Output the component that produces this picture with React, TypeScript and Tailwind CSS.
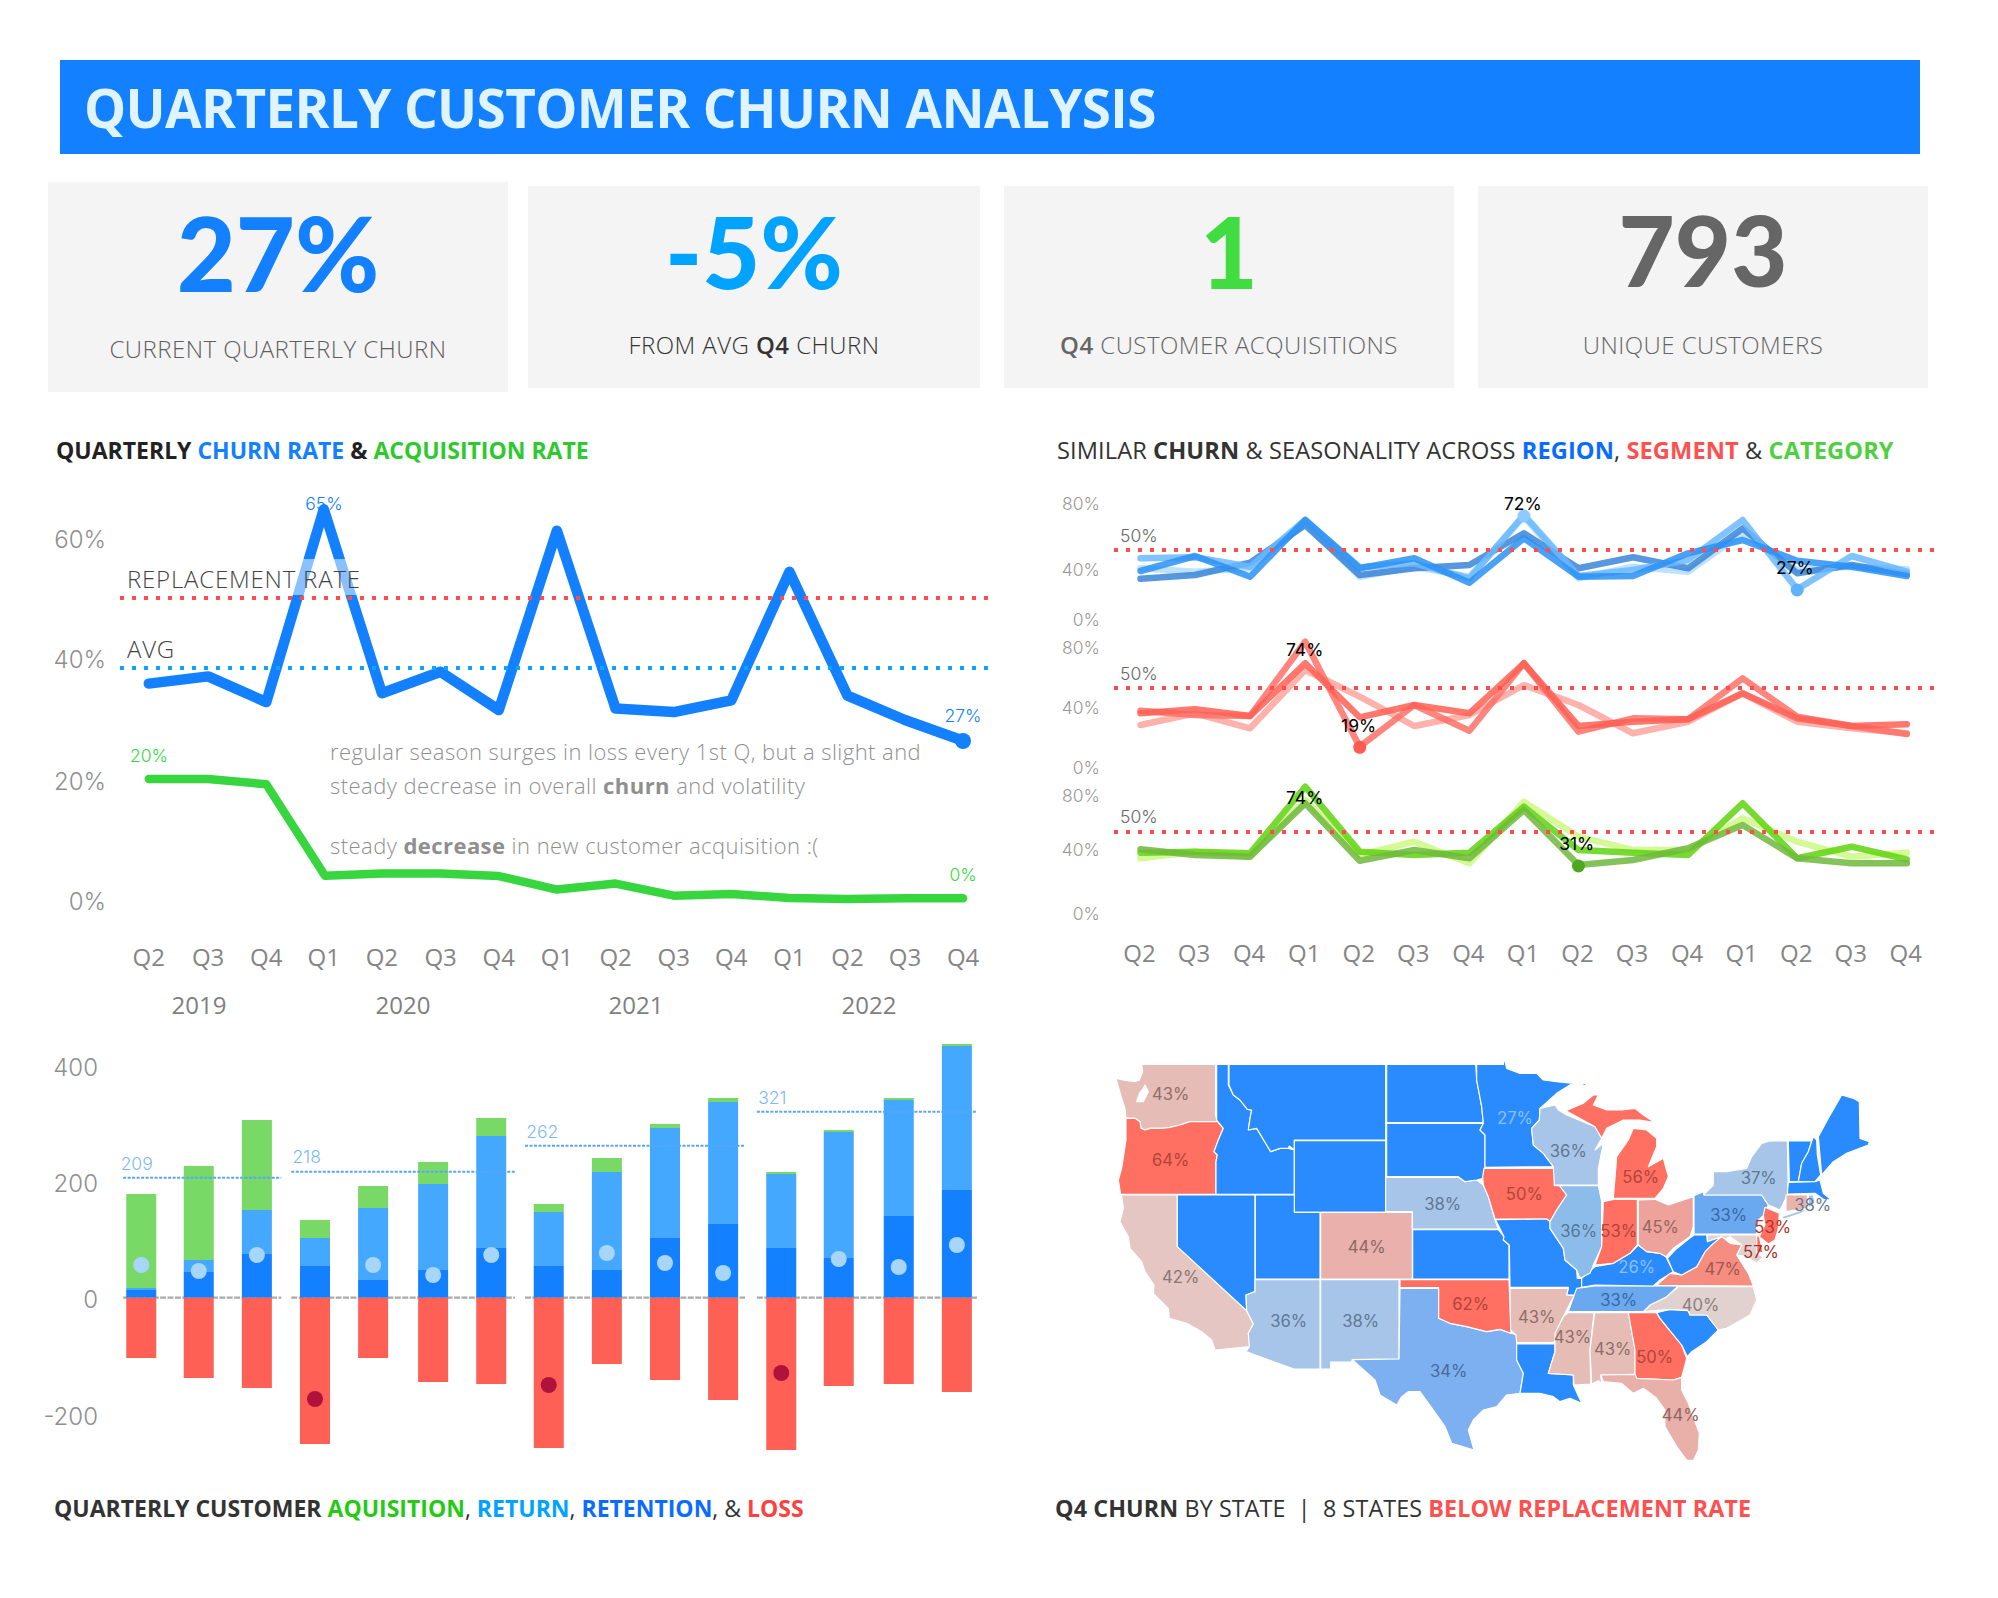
import React from "react";

const lx = (x: number) => x / 1.6 + 30;
const ly = (y: number) => 470 + y / 2.8;
const rx = (x: number) => 1040 + x / 1.742;
const ry = (y: number) => 470 + y / 3;
const bx = (x: number) => x / 1.6 + 30;
const by = (y: number) => 1030 + y / 3;

const pts = (p: number[][], fx: (n: number) => number, fy: (n: number) => number) =>
  p.map(([x, y]) => `${fx(x).toFixed(1)},${fy(y).toFixed(1)}`).join(" ");

const churn = [[190,598],[285,578],[378,650],[470,110],[563,625],[657,565],[750,672],[843,170],[937,668],[1030,678],[1122,645],[1215,285],[1308,632],[1400,700],[1493,758]];
const acq = [[190,865],[285,865],[378,880],[472,1136],[563,1130],[657,1130],[750,1137],[843,1175],[937,1158],[1030,1192],[1122,1187],[1215,1198],[1308,1201],[1400,1199],[1493,1199]];
const quarters = ["Q2","Q3","Q4","Q1","Q2","Q3","Q4","Q1","Q2","Q3","Q4","Q1","Q2","Q3","Q4"];
const INTER = "Inter, sans-serif";

function LineChart() {
  return (
    <svg viewBox="40 470 970 560" className="block w-[970px] h-[560px]">
      {[["60%",548],["40%",668],["20%",790],["0%",909.5]].map(([t,y]) => (
        <text key={t} x={106} y={y} textAnchor="end" fontSize={24} fontFamily={INTER} fontWeight={300} fill="#8f8f8f">{t}</text>
      ))}
      <polyline points={pts(churn, lx, ly)} fill="none" stroke="#1280ff" strokeWidth={10.5} strokeLinejoin="round" strokeLinecap="round" />
      <polyline points={pts(acq, lx, ly)} fill="none" stroke="#37d63f" strokeWidth={8.5} strokeLinejoin="round" strokeLinecap="round" />
      <circle cx={963} cy={741} r={8} fill="#1280ff" />
      <rect x={127} y={559} width={234} height={36} fill="#fff" opacity={0.5} />
      <line x1={120} x2={992} y1={598} y2={598} stroke="#ff4d4d" strokeWidth={4} strokeDasharray="4 8" />
      <line x1={120} x2={992} y1={668} y2={668} stroke="#0aa5ff" strokeWidth={4} strokeDasharray="4 8" />
      <text x={127} y={588} fontSize={24} fontWeight={300} letterSpacing={0.8} fill="#444">REPLACEMENT RATE</text>
      <text x={127} y={657.5} fontSize={24} fontWeight={300} letterSpacing={0.8} fill="#444">AVG</text>
      <g fontSize={17.5} fontFamily={INTER} fontWeight={300} textAnchor="middle">
        <text x={324} y={510} fill="#1280ff">65%</text>
        <text x={963} y={722} fill="#1280ff">27%</text>
        <text x={149} y={762} fill="#37d63f">20%</text>
        <text x={963} y={881} fill="#37d63f">0%</text>
      </g>
      <g fontSize={22} fontWeight={300} letterSpacing={0.45} fill="#8f8f8f">
        <text x={330} y={760}>regular season surges in loss every 1st Q, but a slight and</text>
        <text x={330} y={794}>steady decrease in overall <tspan fontWeight={700}>churn</tspan> and volatility</text>
        <text x={330} y={854}>steady <tspan fontWeight={700}>decrease</tspan> in new customer acquisition :(</text>
      </g>
      {churn.map(([x], i) => (
        <text key={i} x={lx(x)} y={966} textAnchor="middle" fontSize={24} fontWeight={400} fill="#858585">{quarters[i]}</text>
      ))}
      {[["2019",199],["2020",403],["2021",636],["2022",869]].map(([t,x]) => (
        <text key={t} x={x} y={1013.5} textAnchor="middle" fontSize={24} fontWeight={500} fill="#7f7f7f">{t}</text>
      ))}
    </svg>
  );
}

// left, retention top, return top, acquisition top, loss bottom, dot x, dot y, dark dot
const bars: [number, number, number, number, number, number, number, boolean][] = [
  [154,780,774,492,984,178,705,false],
  [246,726,690,408,1044,270,723,false],
  [339,672,540,270,1074,363,675,false],
  [432,708,624,570,1242,456,1107,true],
  [525,750,534,468,984,549,705,false],
  [621,720,462,396,1056,645,735,false],
  [714,654,318,264,1062,738,675,false],
  [806,708,546,522,1254,830,1065,true],
  [899,720,426,384,1002,923,669,false],
  [992,624,294,282,1050,1016,699,false],
  [1085,582,216,204,1110,1109,729,false],
  [1178,654,432,426,1260,1202,1029,true],
  [1270,684,306,300,1068,1294,687,false],
  [1366,558,210,204,1062,1390,711,false],
  [1459,480,48,42,1086,1483,645,false],
];
const avgs: [number, number, number, string, number, number][] = [
  [149,402,443,"209",145,420],
  [418,776,425,"218",420,400],
  [792,1144,347,"262",794,323],
  [1163,1515,245,"321",1165,222],
];

function BarChart() {
  const zero = by(803);
  return (
    <svg viewBox="40 1030 970 460" className="block w-[970px] h-[460px]">
      {[["400",1076],["200",1192],["0",1308],["-200",1425]].map(([t,y]) => (
        <text key={t} x={98} y={y} textAnchor="end" fontSize={24} fontFamily={INTER} fontWeight={300} fill="#8f8f8f">{t}</text>
      ))}
      {avgs.map(([a,b]) => (
        <line key={a} x1={bx(a)} x2={bx(b)} y1={zero} y2={zero} stroke="#aaaaaa" strokeWidth={2.3} strokeDasharray="6 1.4" />
      ))}
      {bars.map(([l,ret,rtn,acqT,loss], i) => (
        <g key={i}>
          <rect x={bx(l)} width={30} y={by(acqT)} height={by(rtn)-by(acqT)} fill="#78d966" />
          <rect x={bx(l)} width={30} y={by(rtn)} height={by(ret)-by(rtn)} fill="#45a8ff" />
          <rect x={bx(l)} width={30} y={by(ret)} height={zero-by(ret)} fill="#1280ff" />
          <rect x={bx(l)} width={30} y={zero} height={by(loss)-zero} fill="#ff6055" />
        </g>
      ))}
      {avgs.map(([a,b,y,t,tx,ty]) => (
        <g key={t}>
          <line x1={bx(a)} x2={bx(b)} y1={by(y)} y2={by(y)} stroke="#55a6fb" strokeWidth={2} strokeDasharray="3 1.5" />
          <text x={bx(tx)} y={by(ty)} fontSize={17.5} fontFamily={INTER} fontWeight={300} fill="#7cb8fb">{t}</text>
        </g>
      ))}
      {bars.map(([, , , , , dx, dy, dark], i) => (
        <circle key={i} cx={bx(dx)} cy={by(dy)} r={8} fill={dark ? "#b0123c" : "#a8d6fb"} />
      ))}
    </svg>
  );
}

const xs = [175,270,366,462,557,652,748,843,938,1033,1129,1224,1319,1414,1510];
const blue: [string, number[]][] = [
  ["#b3dcff",[295,305,295,160,320,290,320,140,325,290,305,190,300,290,298]],
  ["#3a85d8",[326,315,278,165,315,295,285,190,295,262,295,175,310,285,312]],
  ["#6ab8ff",[265,262,290,150,292,280,325,135,318,300,270,150,358,258,305]],
  ["#2a90f5",[303,258,320,150,295,265,338,205,320,318,250,210,272,290,318]],
];
const red: [string, number[]][] = [
  ["#ffa39c",[765,730,775,600,680,768,735,645,705,790,755,670,755,775,790]],
  ["#ff7068",[722,735,738,515,830,705,782,580,785,745,748,625,740,768,792]],
  ["#ff6055",[730,718,738,580,742,705,730,580,768,755,748,670,745,768,763]],
];
const green: [string, number[]][] = [
  ["#ccf884",[1165,1145,1160,990,1155,1115,1180,995,1100,1140,1140,1045,1115,1160,1148]],
  ["#5fd40f",[1148,1145,1150,950,1145,1155,1148,1010,1140,1148,1155,1000,1165,1130,1168]],
  ["#6eb83c",[1138,1155,1160,1000,1172,1140,1165,1020,1185,1170,1135,1065,1165,1180,1180]],
];

function SeriesGroup({ series }: { series: [string, number[]][] }) {
  return (
    <>
      {series.map(([c, v], i) => (
        <polyline
          key={i}
          points={v.map((y, j) => `${rx(xs[j]).toFixed(1)},${ry(y).toFixed(1)}`).join(" ")}
          fill="none"
          stroke={c}
          strokeWidth={6.5}
          strokeOpacity={0.85}
          strokeLinejoin="round"
          strokeLinecap="round"
        />
      ))}
    </>
  );
}

function SmallMultiples() {
  const axis: [string, number][] = [["80%",120],["40%",318],["0%",468],["80%",552],["40%",732],["0%",912],["80%",995],["40%",1158],["0%",1350]];
  const marks: [string, number, number][] = [["72%",841,120],["74%",461,558],["19%",555,785],["27%",1315,312],["74%",461,1002],["31%",935,1140]];
  return (
    <svg viewBox="1040 470 900 520" className="block w-[900px] h-[520px]">
      {axis.map(([t,y],i) => (
        <text key={i} x={1100} y={ry(y)} textAnchor="end" fontSize={17.5} fontFamily={INTER} fontWeight={300} fill="#999">{t}</text>
      ))}
      <SeriesGroup series={blue} />
      <SeriesGroup series={red} />
      <SeriesGroup series={green} />
      {[[240,216],[654,630],[1086,1060]].map(([l,t]) => (
        <g key={l}>
          <line x1={1114} x2={1936} y1={ry(l)} y2={ry(l)} stroke="#ff4d4d" strokeWidth={4} strokeDasharray="4 8" />
          <text x={1120} y={ry(t)} fontSize={17.5} fontFamily={INTER} fontWeight={300} fill="#666">50%</text>
        </g>
      ))}
      <circle cx={rx(843)} cy={ry(138)} r={6.5} fill="#8ccaff" />
      <circle cx={rx(1319)} cy={ry(360)} r={6.5} fill="#5fb2ff" />
      <circle cx={rx(557)} cy={ry(832)} r={6.5} fill="#ff5a50" />
      <circle cx={rx(938)} cy={ry(1188)} r={6.5} fill="#4ea81f" />
      {marks.map(([t,x,y],i) => (
        <text key={i} x={rx(x)} y={ry(y)} textAnchor="middle" fontSize={17.5} fontFamily={INTER} fontWeight={400} fill="#000">{t}</text>
      ))}
      {xs.map((x,i) => (
        <text key={i} x={rx(x) - 1} y={962} textAnchor="middle" fontSize={24} fontWeight={400} fill="#858585">{quarters[i]}</text>
      ))}
    </svg>
  );
}

const B = "#2a8bff", L = "#a7c5e8", R = "#ff7062", P = "#e6bdb6", T = "#7db0f0", M = "#6aa8f0";

// West: crop-A coordinates
const west: [string, string][] = [
  [P,"185,73 407,73 407,228 413,245 330,245 300,255 270,262 245,265 210,265 195,270 183,265 180,245 165,235 138,235 135,205 125,175 108,115 130,120 165,125 178,120 188,95"],
  [R,"138,235 165,235 180,245 183,265 195,270 210,265 245,265 270,262 300,255 330,245 413,245 430,265 415,300 402,335 412,345 408,365 408,463 122,463 115,420 125,385 138,300"],
  ["#e5c6c3","125,465 292,465 292,620 500,812 520,852 505,880 510,920 405,930 395,900 365,875 320,850 268,835 265,805 220,760 222,735 195,695 185,665 150,625 145,590 120,545 130,505"],
  [B,"292,465 525,465 525,755 498,765 500,812 292,620"],
  [B,"410,73 445,73 445,135 460,165 480,180 502,208 515,210 510,235 505,270 530,265 545,290 560,315 572,335 600,325 625,325 643,330 643,463 408,463 408,365 412,345 402,335 415,300 430,265 410,240"],
  [B,"447,73 917,73 917,300 643,300 643,330 628,318 625,325 600,325 572,335 560,315 545,290 530,265 505,270 510,235 515,210 502,208 480,180 460,165 447,135"],
  [B,"643,302 917,302 917,517 643,517"],
  [B,"526,465 643,465 643,517 720,517 720,717 526,717"],
  ["#eab0ab","722,517 997,517 997,717 722,717"],
  [L,"525,719 720,719 720,987 642,987 498,935 508,920 505,880 520,852 500,812 498,765 525,755"],
  [L,"722,719 957,719 957,957 817,959 815,966 752,966 752,987 722,987"],
  [T,"960,745 1076,745 1076,835 1110,850 1160,860 1220,875 1260,868 1310,885 1310,960 1330,1000 1320,1060 1280,1065 1250,1100 1210,1110 1180,1140 1165,1170 1182,1230 1115,1210 1095,1160 1060,1110 1020,1055 985,1055 965,1070 950,1095 900,1065 885,1020 817,959 957,957"],
  [R,"960,719 1287,719 1293,880 1260,868 1220,875 1160,860 1110,850 1076,835 1076,743 960,743"],
  [B,"998,569 1255,569 1272,590 1270,600 1287,615 1287,717 998,717"],
  [L,"917,412 1135,412 1155,425 1190,420 1210,435 1225,470 1245,540 1255,567 997,567 997,515 917,515"],
  [B,"920,250 1210,250 1200,270 1215,285 1215,383 1210,415 1190,420 1155,425 1135,410 920,410"],
  [B,"920,73 1187,73 1190,120 1205,200 1210,248 920,248"],
  [B,"1190,73 1270,73 1272,52 1280,85 1320,100 1370,100 1390,120 1430,125 1478,130 1430,160 1380,205 1378,240 1355,265 1360,315 1390,340 1420,380 1215,382 1215,285 1200,270 1210,250 1205,200 1190,120"],
  [R,"1212,385 1422,385 1428,420 1460,465 1430,510 1425,520 1410,545 1400,537 1245,537 1225,470 1210,435 1208,410"],
  [B,"1247,539 1400,537 1410,545 1410,565 1450,625 1455,660 1490,690 1492,715 1505,715 1505,740 1485,765 1460,765 1465,742 1290,742 1288,615 1270,600 1272,590"],
];
const westWhite = "195,135 205,155 190,185 170,185 178,160 190,145";

// East: crop-B coordinates
const east: [string, string][] = [
  [P,"30,745 205,745 200,765 222,767 205,800 190,830 175,860 162,908 50,908 48,885 32,870"],
  [B,"50,912 165,912 165,935 145,1000 220,1005 220,1035 245,1090 210,1075 180,1085 160,1070 120,1060 60,1060 70,1000 50,960"],
  [P,"205,818 282,818 270,930 272,1032 222,1035 220,1005 145,1000 165,935 165,880 190,830"],
  [P,"284,818 385,818 405,930 405,1003 302,1005 305,1030 295,1022 275,1032 270,930"],
  [R,"385,818 470,818 480,835 545,915 560,955 545,1012 520,1020 410,1015 405,1003 405,930"],
  [B,"470,818 510,808 565,812 570,825 620,825 655,870 620,905 575,935 562,950 545,915 480,835"],
  ["#e1d2d0","430,815 450,795 500,770 535,740 760,740 770,780 750,825 680,865 655,870 620,825 570,825 565,812 510,808"],
  [M,"230,745 285,738 535,738 500,770 450,795 430,815 205,815 222,767"],
  [B,"245,740 245,715 285,680 340,670 390,640 415,615 440,635 480,640 498,650 505,665 520,695 480,720 460,738 285,735 245,742"],
  ["#8cbcea","163,437 295,437 305,485 305,620 280,675 270,700 240,715 230,690 195,660 190,625 150,565 150,545 170,510 200,465 165,420"],
  [L,"120,205 165,195 175,210 200,225 285,260 305,295 285,330 310,310 295,385 295,435 163,435 160,380 130,340 100,315 95,265 118,240"],
  [R,"198,212 250,190 280,165 295,165 280,195 320,210 365,210 405,205 430,225 465,248 420,240 370,240 320,265 305,295 285,260"],
  [R,"240,135 268,125 255,137"],
  [R,"340,475 350,350 385,300 400,265 440,270 470,295 470,320 445,380 490,355 505,410 490,445 465,475"],
  [R,"310,485 340,478 412,478 412,615 390,640 340,670 285,675 305,620"],
  ["#eda39b","415,480 465,478 505,495 580,470 580,560 570,590 520,625 498,650 480,640 440,635 415,615"],
  [M,"582,467 610,455 612,465 785,465 805,495 792,525 770,545 770,582 582,582"],
  [L,"612,463 640,435 640,395 680,395 740,385 755,350 785,310 810,303 862,303 865,460 840,510 805,495 785,465 612,465"],
  [L,"845,530 920,505 905,520 850,538"],
  [B,"865,303 935,303 925,335 905,370 895,425 868,425"],
  [B,"895,425 905,370 925,335 940,290 950,300 952,345 962,405 945,425"],
  [B,"955,290 985,235 1025,165 1060,175 1078,185 1080,295 1108,305 1105,315 1040,340 1000,365 965,405"],
  [B,"865,427 945,425 960,420 970,460 995,480 970,478 945,460 862,462"],
  ["#e9b4ad","858,465 922,465 922,505 858,515"],
  [L,"925,465 940,465 945,490 925,505"],
  [R,"795,502 838,520 835,565 825,600 805,612 778,590 795,555 790,525"],
  ["#e1d2d0","622,585 770,585 770,640 790,650 770,670 740,650 710,645 725,615 690,590 668,600 622,605"],
  [R,"770,585 778,590 790,640 770,635"],
  ["#f58d80","470,736 510,700 545,705 590,680 615,635 640,610 665,590 690,610 725,615 710,645 745,700 760,738"],
  ["#f58d80","778,670 762,705 768,690"],
  [B,"502,655 525,630 575,590 582,585 620,585 622,605 665,590 640,610 615,635 590,680 545,705 520,695"],
  ["#e9b0aa","302,1005 405,1003 410,1015 520,1020 545,1012 545,1050 565,1090 598,1180 595,1230 580,1262 560,1260 530,1220 495,1160 495,1110 470,1075 430,1045 400,1060 365,1030 310,1025"],
];

const westLabels: [string, number, number, string][] = [
  ["43%",272,163,"#8f6e69"],["64%",272,361,"#b0443a"],["42%",302,710,"#8a7673"],["38%",1088,493,"#5f7894"],
  ["44%",860,620,"#8e6763"],["36%",626,842,"#5f7894"],["38%",842,842,"#5f7894"],["34%",1106,992,"#466c99"],["62%",1172,793,"#b0443a"],
];
const eastLabels: [string, number, number, string][] = [
  ["27%",45,235,"#8cc0ff"],["36%",205,332,"#5f7894"],["50%",73,463,"#b0443a"],["36%",236,572,"#557799"],["53%",356,572,"#b0443a"],
  ["56%",422,410,"#b0443a"],["45%",481,560,"#96655f"],["33%",686,524,"#3a69a2"],["37%",776,415,"#5f7894"],["38%",938,494,"#667990"],
  ["53%",818,560,"#b5332b"],["57%",783,637,"#a8322b"],["26%",410,680,"#8cc0ff"],["47%",668,686,"#a25850"],["33%",356,781,"#3a69a2"],
  ["40%",602,794,"#887f7d"],["43%",110,830,"#8f6e69"],["43%",217,890,"#8f6e69"],["43%",338,926,"#8f6e69"],["50%",464,950,"#b0443a"],["44%",542,1124,"#8e6763"],
];

function USMap() {
  return (
    <svg viewBox="0 0 2460 1320" className="block w-[820px] h-[440px]">
      <g stroke="#fff" strokeWidth={3.5} strokeLinejoin="round">
        {west.map(([f,p],i) => <polygon key={i} points={p} fill={f} />)}
        <polygon points={westWhite} fill="#fff" />
      </g>
      <g transform="translate(1260 0)" stroke="#fff" strokeWidth={3.5} strokeLinejoin="round">
        {east.map(([f,p],i) => <polygon key={i} points={p} fill={f} />)}
      </g>
      <g fontSize={50} textAnchor="middle" dominantBaseline="central" fontFamily={INTER} fontWeight={400}>
        {westLabels.map(([t,x,y,c],i) => <text key={i} x={x} y={y} fill={c}>{t}</text>)}
        <g transform="translate(1260 0)">
          {eastLabels.map(([t,x,y,c],i) => <text key={i} x={x} y={y} fill={c}>{t}</text>)}
        </g>
      </g>
    </svg>
  );
}

function Card({ w, h, value, color, size, children, labelColor, pt, lt }: { w: string; h: string; value: string; color: string; size: string; children: React.ReactNode; labelColor: string; pt: string; lt: string }) {
  return (
    <div className={`${w} ${h} ${pt} bg-[#f4f4f4] flex flex-col items-center`}>
      <div className={`font-['Lato'] font-black ${size} leading-[84px] h-[84px] ${color}`}>{value}</div>
      <div className={`${lt} text-[24px] leading-[28px] font-light tracking-[0.45px] ${labelColor}`}>{children}</div>
    </div>
  );
}

export default function App() {
  return (
    <div className="w-[1998px] h-[1598px] bg-white font-['Open_Sans',sans-serif] overflow-hidden">
      <div className="pt-[60px] pl-[60px]">
        <div className="w-[1860px] h-[94px] bg-[#1280ff] flex items-center pl-[24px]">
          <div className="text-[53px] leading-none font-bold text-[#dff4ff] tracking-[-0.6px] whitespace-nowrap">QUARTERLY CUSTOMER CHURN ANALYSIS</div>
        </div>
      </div>
      <div className="pl-[48px] pt-[28px] flex items-center">
        <Card w="w-[460px]" h="h-[210px]" pt="pt-[29px]" lt="mt-[40px]" size="text-[102px]" value="27%" color="text-[#1280ff]" labelColor="text-[#5f5f5f]">CURRENT QUARTERLY CHURN</Card>
        <div className="w-[20px]" />
        <Card w="w-[452px]" h="h-[202px]" pt="pt-[22px]" lt="mt-[39px]" size="text-[100px]" value="-5%" color="text-[#00a3ff]" labelColor="text-[#333]">FROM AVG <b className="font-semibold">Q4</b> CHURN</Card>
        <div className="w-[24px]" />
        <Card w="w-[450px]" h="h-[202px]" pt="pt-[22px]" lt="mt-[39px]" size="text-[100px]" value="1" color="text-[#41dc41]" labelColor="text-[#666]"><b className="font-semibold">Q4</b> CUSTOMER ACQUISITIONS</Card>
        <div className="w-[24px]" />
        <Card w="w-[450px]" h="h-[202px]" pt="pt-[22px]" lt="mt-[39px]" size="text-[97px]" value="793" color="text-[#666666]" labelColor="text-[#666]">UNIQUE CUSTOMERS</Card>
      </div>
      <div className="flex pl-[40px]">
        <div className="w-[970px]">
          <div className="h-[78px] pt-[39px] pl-[16px] flex items-center text-[23px] font-bold text-[#222] whitespace-pre">
            <span>QUARTERLY <span className="text-[#1280ff]">CHURN RATE</span> &amp; <span className="text-[#2ec92e]">ACQUISITION RATE</span></span>
          </div>
          <LineChart />
          <BarChart />
          <div className="h-[36px] pl-[14px] flex items-center text-[23px] font-bold text-[#333] whitespace-pre">
            <span>QUARTERLY CUSTOMER <span className="text-[#26c914]">AQUISITION</span><span className="font-normal">,</span> <span className="text-[#00a3ff]">RETURN</span><span className="font-normal">,</span> <span className="text-[#0a6cff]">RETENTION</span><span className="font-normal">, &amp;</span> <span className="text-[#ff4040]">LOSS</span></span>
          </div>
        </div>
        <div className="ml-[30px] w-[900px]">
          <div className="h-[78px] pt-[40px] pl-[17px] flex items-center text-[23.6px] font-normal tracking-[0.1px] text-[#333] whitespace-pre">
            <span>SIMILAR <b className="font-bold">CHURN</b> &amp; SEASONALITY ACROSS <b className="font-bold text-[#0a6cff]">REGION</b>, <b className="font-bold text-[#ff5050]">SEGMENT</b> &amp; <b className="font-bold text-[#50d040]">CATEGORY</b></span>
          </div>
          <SmallMultiples />
          <div className="h-[50px]" />
          <div className="pl-[40px]"><USMap /></div>
          <div className="h-[36px] mt-[10px] pl-[15px] flex items-center text-[23.3px] font-normal tracking-[0.1px] text-[#333] whitespace-pre">
            <span><b className="font-bold">Q4 CHURN</b> BY STATE  |  8 STATES <b className="font-bold text-[#ff5050]">BELOW REPLACEMENT RATE</b></span>
          </div>
        </div>
      </div>
    </div>
  );
}
